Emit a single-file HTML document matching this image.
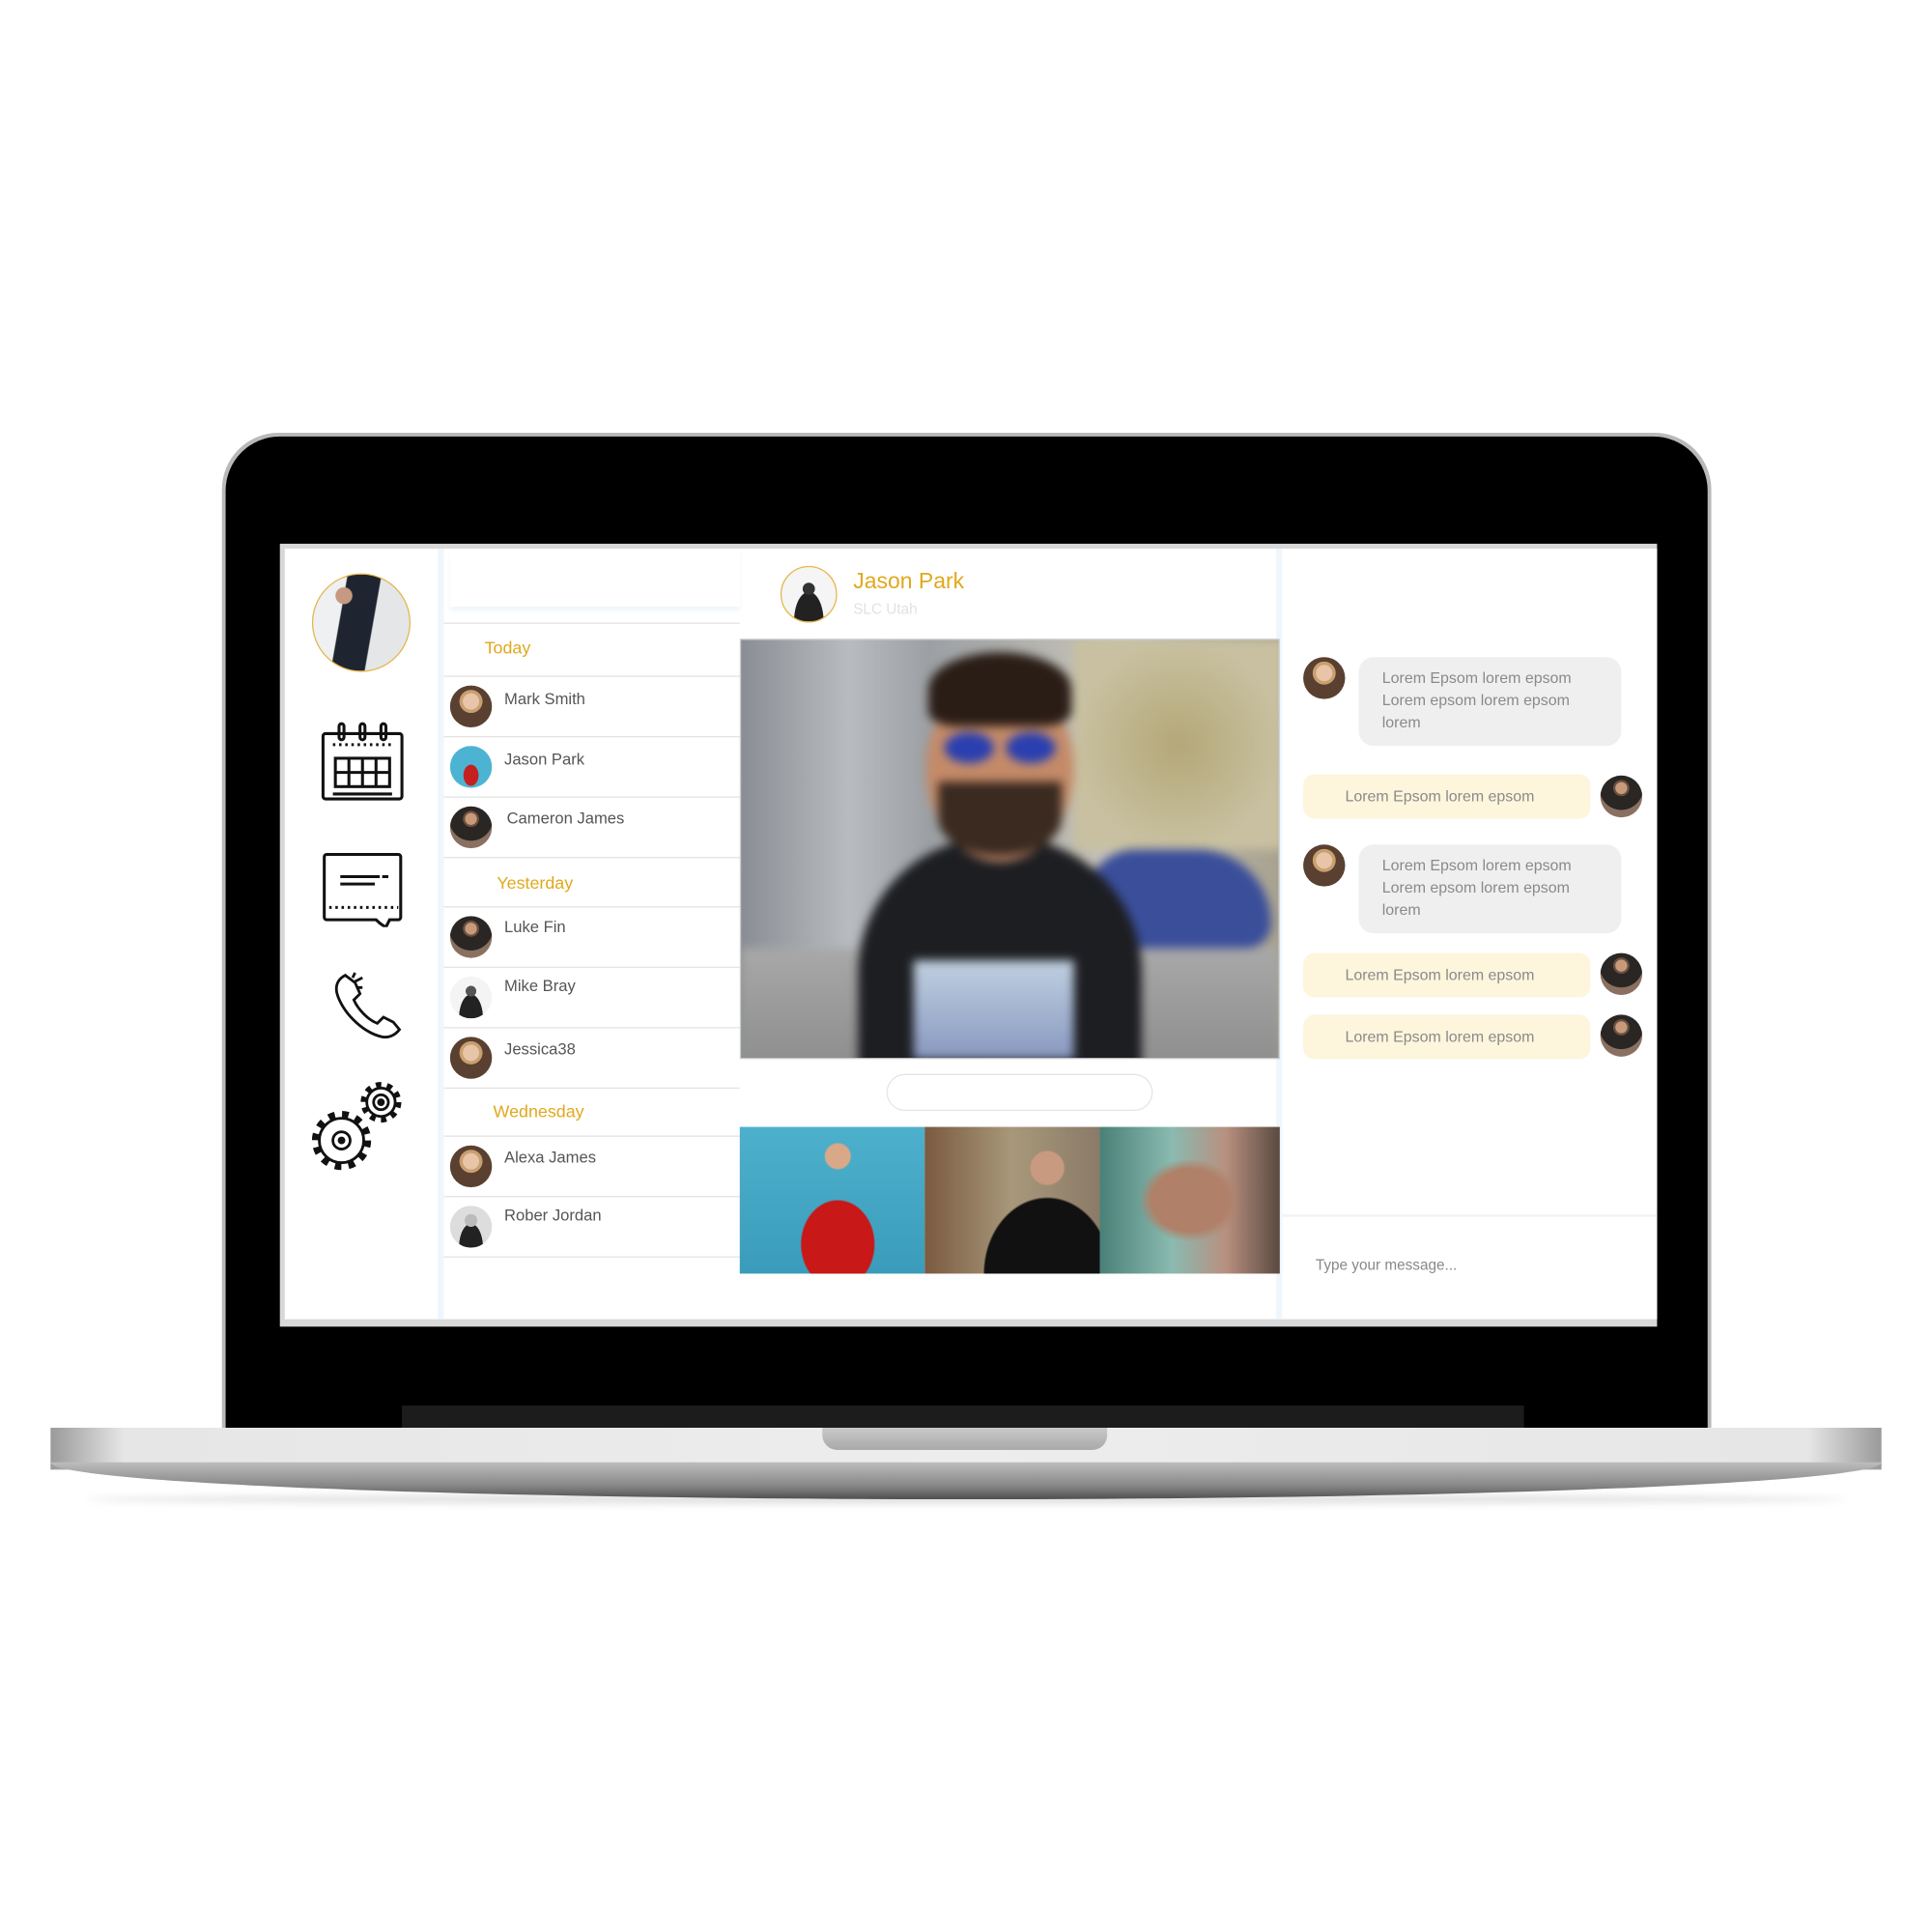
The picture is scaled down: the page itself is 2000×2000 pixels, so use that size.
<!DOCTYPE html>
<html><head><meta charset="utf-8"><style>
html,body{margin:0;padding:0;background:#fff;width:2000px;height:2000px;overflow:hidden}
#w{position:absolute;left:0;top:0;width:1567px;height:1567px;transform:scale(1.27633);transform-origin:0 0;font-family:"Liberation Sans",sans-serif}
.a{position:absolute}
.av{position:absolute;border-radius:50%;overflow:hidden}
.row{position:absolute;left:360px;width:240px;border-top:1px solid #e3e3e3;background:#fff}
.nm{position:absolute;left:49px;font-size:13px;color:#555}
.hd{position:absolute;font-size:14px;color:#e0a81c}
.gb{position:absolute;left:1102px;width:213px;height:72px;background:#efefef;border-radius:12px;font-size:12.5px;color:#8a8a8a;line-height:18px;box-sizing:border-box;padding:8px 0 0 19px}
.yb{position:absolute;left:1057px;width:233px;height:36px;background:#fdf5dc;border-radius:9px;font-size:12.5px;color:#8a8a8a;line-height:36px;box-sizing:border-box;padding-left:34px}
.f{background:radial-gradient(circle at 50% 38%,#e8c4a8 0 24%,#c8a070 25% 34%,#5a4030 35%)}
.m{background:radial-gradient(circle at 50% 30%,#c89a7a 0 16%,#6a5040 17% 22%,#2a2624 23% 60%,#8a7060 61%)}
</style></head><body><div id="w">
<div class="a" style="left:180px;top:351px;width:1208px;height:820px;border-radius:46px 46px 0 0;background:#b9b9b9"></div>
<div class="a" style="left:183px;top:354px;width:1202px;height:817px;border-radius:44px 44px 0 0;background:#000"></div>
<div class="a" style="left:326px;top:1140px;width:910px;height:20px;background:#1c1c1c"></div>
<div class="a" style="left:41px;top:1158px;width:1485px;height:34px;background:linear-gradient(90deg,#9a9a9a,#e6e6e6 4%,#ededed 50%,#e6e6e6 96%,#9a9a9a)"></div>
<div class="a" style="left:41px;top:1186px;width:1485px;height:30px;border-radius:0 0 50% 50%/0 0 100% 100%;background:linear-gradient(#bdbdbd,#8a8a8a 60%,#5a5a5a);"></div>
<div class="a" style="left:70px;top:1212px;width:1427px;height:8px;border-radius:50%;background:rgba(0,0,0,.12);filter:blur(3px)"></div>
<div class="a" style="left:667px;top:1158px;width:231px;height:18px;border-radius:0 0 12px 12px;background:linear-gradient(#c9c9c9,#a9a9a9)"></div>
<div class="a" style="left:227px;top:441px;width:1117px;height:635px;background:#d8d8d8"></div>
<div class="a" style="left:231px;top:445px;width:1113px;height:625px;background:#fff;overflow:hidden"></div>
<div class="a" style="left:355px;top:445px;width:5px;height:625px;background:#f0f7fc"></div>
<div class="a" style="left:1035px;top:445px;width:5px;height:625px;background:#f0f7fc"></div>
<div class="av" style="left:253px;top:465px;width:78px;height:78px;border:1px solid #e5b64a;background:radial-gradient(circle at 32% 22%,#c59a80 0 8%,transparent 9%),linear-gradient(100deg,#eef0f2 0 30%,#1e2530 31% 60%,#e4e6e8 61%)"></div>
<svg class="a" style="left:258px;top:585px" width="72" height="66" viewBox="0 0 72 66" fill="none" stroke="#111" stroke-width="2.4">
<rect x="4" y="10" width="64" height="53" rx="2"/><rect x="14" y="30" width="44" height="23"/>
<path d="M14 41.5h44M25 30v23M36 30v23M47 30v23M12 59h48"/>
<path d="M12 19h48" stroke-dasharray="2 3"/>
<rect x="17" y="2" width="4" height="13" rx="2"/><rect x="34" y="2" width="4" height="13" rx="2"/><rect x="51" y="2" width="4" height="13" rx="2"/>
</svg>
<svg class="a" style="left:259px;top:690px" width="70" height="62" viewBox="0 0 70 62" fill="none" stroke="#111" stroke-width="2.4">
<path d="M6 3h58a2 2 0 0 1 2 2v49a2 2 0 0 1-2 2H57l-3 6c-4-2-6-4-8-6H6a2 2 0 0 1-2-2V5a2 2 0 0 1 2-2z"/>
<path d="M17 21h32M17 27h28M51 21h5"/><path d="M8 46h56" stroke-dasharray="2 3"/>
</svg>
<svg class="a" style="left:264px;top:785px" width="64" height="60" viewBox="0 0 64 60" fill="none" stroke="#111" stroke-width="2.2">
<path d="M16 6c-6 3-9 9-6 17 6 16 22 30 36 33 6 1 11-2 14-6l-5-6-8-4-5 5c-8-3-16-12-19-19l5-5-4-9z"/>
<path d="M24 4l-2 4M30 8l-6 3M30 16h-5"/>
</svg>
<svg class="a" style="left:248px;top:873px" width="82" height="82" viewBox="0 0 82 82" fill="none" stroke="#111" stroke-width="2.2">
<circle cx="29" cy="52" r="20" stroke-width="8" stroke-dasharray="5 5.5"/>
<circle cx="29" cy="52" r="18" fill="#fff"/><circle cx="29" cy="52" r="7"/><circle cx="29" cy="52" r="2" fill="#111"/>
<circle cx="61" cy="21" r="13" stroke-width="7" stroke-dasharray="4 4.2"/>
<circle cx="61" cy="21" r="11.5" fill="#fff"/><circle cx="61" cy="21" r="6"/><circle cx="61" cy="21" r="2" fill="#111"/>
</svg>
<div class="a" style="left:365px;top:446px;width:235px;height:46px;background:#fff;box-shadow:0 3px 4px #eef5fa"></div>
<div class="row" style="top:505px;height:42px"><span class="hd" style="left:33px;top:11px">Today</span></div>
<div class="row" style="top:548px;height:48px"><div class="av f" style="left:5px;top:7px;width:34px;height:34px"></div><span class="nm" style="top:10px">Mark Smith</span></div>
<div class="row" style="top:597px;height:48px"><div class="av" style="left:5px;top:7px;width:34px;height:34px;background:radial-gradient(ellipse at 50% 70%,#c42020 0 25%,transparent 26%),#4cb3d3"></div><span class="nm" style="top:10px">Jason Park</span></div>
<div class="row" style="top:646px;height:48px"><div class="av m" style="left:5px;top:7px;width:34px;height:34px"></div><span class="nm" style="top:9px;left:51px">Cameron James</span></div>
<div class="row" style="top:695px;height:39px"><span class="hd" style="left:43px;top:12px">Yesterday</span></div>
<div class="row" style="top:735px;height:48px"><div class="av m" style="left:5px;top:7px;width:34px;height:34px"></div><span class="nm" style="top:8px">Luke Fin</span></div>
<div class="row" style="top:784px;height:48px"><div class="av" style="left:5px;top:7px;width:34px;height:34px;background:radial-gradient(circle at 50% 35%,#555 0 15%,transparent 16%),radial-gradient(ellipse at 50% 100%,#222 0 40%,#f4f4f4 41%)"></div><span class="nm" style="top:7px">Mike Bray</span></div>
<div class="row" style="top:833px;height:48px"><div class="av f" style="left:5px;top:7px;width:34px;height:34px"></div><span class="nm" style="top:9px">Jessica38</span></div>
<div class="row" style="top:882px;height:38px"><span class="hd" style="left:40px;top:10px">Wednesday</span></div>
<div class="row" style="top:921px;height:48px"><div class="av f" style="left:5px;top:7px;width:34px;height:34px"></div><span class="nm" style="top:9px">Alexa James</span></div>
<div class="row" style="top:970px;height:48px;border-bottom:1px solid #e3e3e3"><div class="av" style="left:5px;top:7px;width:34px;height:34px;background:radial-gradient(circle at 50% 35%,#bbb 0 18%,transparent 19%),radial-gradient(ellipse at 50% 100%,#222 0 40%,#ddd 41%)"></div><span class="nm" style="top:7px">Rober Jordan</span></div>
<div class="av" style="left:633px;top:459px;width:44px;height:44px;border:1px solid #e5b64a;background:radial-gradient(circle at 50% 40%,#333 0 14%,transparent 15%),radial-gradient(ellipse at 50% 100%,#222 0 38%,#f5f5f5 39%)"></div>
<div class="a" style="left:692px;top:461px;font-size:18px;color:#e0a81c">Jason Park</div>
<div class="a" style="left:692px;top:487px;font-size:12px;color:#e2e2e2">SLC Utah</div>
<div class="a" style="left:600px;top:518px;width:438px;height:341px;overflow:hidden;background:linear-gradient(90deg,#8a8e94 0,#b8bcc0 20%,#9ca0a4 35%,#c8c4b8 70%,#a8a290 100%);border:1px solid #ccc;box-sizing:border-box">
<div class="a" style="left:0;top:0;width:438px;height:341px;filter:blur(4px)">
<div class="a" style="left:270px;top:0;width:170px;height:170px;background:radial-gradient(circle,#b4a878,#c8c0a0 70%)"></div>
<div class="a" style="left:280px;top:170px;width:150px;height:80px;border-radius:40px 60px 20px 20px;background:#3a4e9a"></div>
<div class="a" style="left:0;top:250px;width:438px;height:100px;background:linear-gradient(#a8a8a8,#8c8c8c)"></div>
<div class="a" style="left:95px;top:160px;width:230px;height:200px;border-radius:110px 110px 0 0;background:#1d1e22"></div>
<div class="a" style="left:150px;top:30px;width:120px;height:150px;border-radius:50%;background:#c48a68"></div>
<div class="a" style="left:152px;top:10px;width:116px;height:60px;border-radius:50% 50% 20% 20%;background:#2a1d16"></div>
<div class="a" style="left:160px;top:115px;width:100px;height:60px;border-radius:0 0 50% 50%;background:#3a2a20"></div>
<div class="a" style="left:165px;top:75px;width:40px;height:25px;border-radius:50%;background:#2a3fb0"></div>
<div class="a" style="left:215px;top:75px;width:40px;height:25px;border-radius:50%;background:#2a3fb0"></div>
<div class="a" style="left:140px;top:260px;width:130px;height:80px;background:linear-gradient(#c0d0e0,#8898c0)"></div>
</div></div>
<div class="a" style="left:719px;top:871px;width:216px;height:30px;border:1px solid #e5e5e5;border-radius:16px;box-sizing:border-box"></div>
<div class="a" style="left:600px;top:914px;width:150px;height:119px;background:radial-gradient(circle at 53% 20%,#d8a888 0 8%,transparent 9%),radial-gradient(ellipse at 53% 80%,#c81818 0 26%,transparent 27%),linear-gradient(#4db0cc,#3a9cba)"></div>
<div class="a" style="left:750px;top:914px;width:142px;height:119px;background:radial-gradient(circle at 70% 28%,#c89a80 0 10%,transparent 11%),radial-gradient(ellipse at 70% 100%,#111 0 36%,transparent 37%),linear-gradient(90deg,#7a5a40,#a8987a 50%,#8a7a68)"></div>
<div class="a" style="left:892px;top:914px;width:146px;height:119px;background:radial-gradient(ellipse at 50% 50%,#b08068 0 30%,transparent 40%),linear-gradient(90deg,#4a8078,#8abab0 40%,#b89080 70%,#5a4a40)"></div>
<div class="av f" style="left:1057px;top:533px;width:34px;height:34px"></div>
<div class="gb" style="top:533px">Lorem Epsom lorem epsom<br>Lorem epsom lorem epsom<br>lorem</div>
<div class="yb" style="top:628px">Lorem Epsom lorem epsom</div>
<div class="av m" style="left:1298px;top:629px;width:34px;height:34px"></div>
<div class="av f" style="left:1057px;top:685px;width:34px;height:34px"></div>
<div class="gb" style="top:685px">Lorem Epsom lorem epsom<br>Lorem epsom lorem epsom<br>lorem</div>
<div class="yb" style="top:773px">Lorem Epsom lorem epsom</div>
<div class="av m" style="left:1298px;top:773px;width:34px;height:34px"></div>
<div class="yb" style="top:823px">Lorem Epsom lorem epsom</div>
<div class="av m" style="left:1298px;top:823px;width:34px;height:34px"></div>
<div class="a" style="left:1040px;top:985px;width:304px;height:2px;background:#f0f4f7"></div>
<div class="a" style="left:1067px;top:1019px;font-size:12px;color:#888">Type your message...</div>
</div></body></html>
